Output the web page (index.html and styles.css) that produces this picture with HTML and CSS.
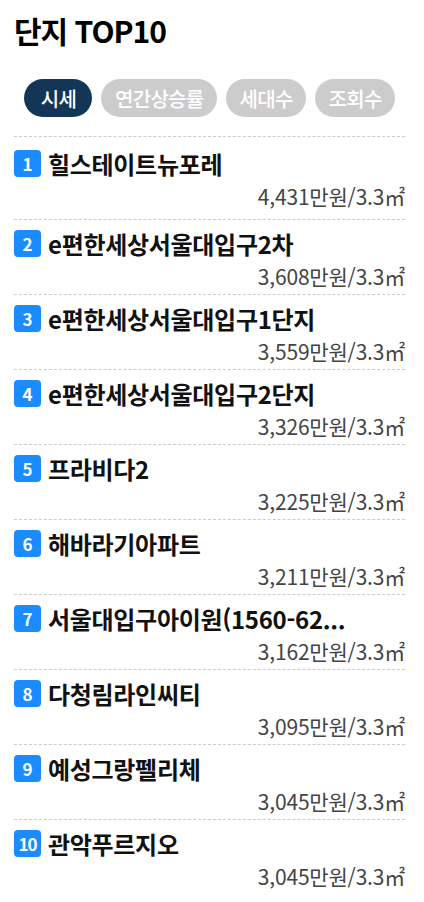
FILE: index.html
```html
<!DOCTYPE html>
<html lang="ko">
<head>
<meta charset="utf-8">
<link rel="stylesheet" href="styles.css">
</head>
<body>
<div class="wrap">
  <h1 class="title">단지 TOP10</h1>
  <div class="tabs">
    <span class="tab active">시세</span>
    <span class="tab">연간상승률</span>
    <span class="tab">세대수</span>
    <span class="tab">조회수</span>
  </div>
  <ul class="list">
    <li class="item"><div class="name-row"><span class="rank">1</span><span class="name">힐스테이트뉴포레</span></div><div class="price">4,431만원/3.3㎡</div></li>
    <li class="item"><div class="name-row"><span class="rank">2</span><span class="name">e편한세상서울대입구2차</span></div><div class="price">3,608만원/3.3㎡</div></li>
    <li class="item"><div class="name-row"><span class="rank">3</span><span class="name">e편한세상서울대입구1단지</span></div><div class="price">3,559만원/3.3㎡</div></li>
    <li class="item"><div class="name-row"><span class="rank">4</span><span class="name">e편한세상서울대입구2단지</span></div><div class="price">3,326만원/3.3㎡</div></li>
    <li class="item"><div class="name-row"><span class="rank">5</span><span class="name">프라비다2</span></div><div class="price">3,225만원/3.3㎡</div></li>
    <li class="item"><div class="name-row"><span class="rank">6</span><span class="name">해바라기아파트</span></div><div class="price">3,211만원/3.3㎡</div></li>
    <li class="item"><div class="name-row"><span class="rank">7</span><span class="name">서울대입구아이원(1560-62...</span></div><div class="price">3,162만원/3.3㎡</div></li>
    <li class="item"><div class="name-row"><span class="rank">8</span><span class="name">다청림라인씨티</span></div><div class="price">3,095만원/3.3㎡</div></li>
    <li class="item"><div class="name-row"><span class="rank">9</span><span class="name">예성그랑펠리체</span></div><div class="price">3,045만원/3.3㎡</div></li>
    <li class="item"><div class="name-row"><span class="rank rank-wide">10</span><span class="name">관악푸르지오</span></div><div class="price">3,045만원/3.3㎡</div></li>
  </ul>
</div>
</body>
</html>
```

FILE: styles.css
```css
* { box-sizing: border-box; }
html, body { margin: 0; padding: 0; background: #fff; }
body {
  font-family: "Noto Sans CJK KR", "Noto Sans", sans-serif;
  color: #111;
}
.wrap {
  padding: 0 19px 0 14px;
}
.title {
  margin: 0;
  padding-top: 11px;
  font-size: 30px;
  line-height: 38px;
  font-weight: 700;
  letter-spacing: -1px;
  color: #000;
}
.tabs {
  display: flex;
  gap: 9px;
  padding: 0 0 0 10px;
  margin-top: 30px;
  margin-bottom: 19px;
}
.tab {
  display: inline-flex;
  align-items: center;
  justify-content: center;
  height: 38px;
  padding: 0 13px 0 14px;
  border-radius: 19px;
  background: #cccccc;
  color: #fff;
  font-size: 20px;
  font-weight: 500;
  letter-spacing: -0.7px;
}
.tab.active {
  background: #133556;
  min-width: 68px;
}
.list {
  list-style: none;
  margin: 0;
  padding: 0;
}
.item {
  border-top: 1px dashed #cccccc;
  padding: 10px 0 6px;
}
.item:first-child {
  padding-top: 13px;
  padding-bottom: 11px;
}
.name-row {
  display: flex;
  align-items: center;
  height: 27px;
}
.rank {
  flex: none;
  width: 27px;
  height: 27px;
  border-radius: 4px;
  background: #1a8cff;
  color: #fff;
  font-size: 17px;
  font-weight: 700;
  line-height: 27px;
  text-align: center;
}
.rank-wide { letter-spacing: -1px; }
.name {
  margin-left: 7px;
  font-size: 24px;
  font-weight: 700;
  color: #111;
  white-space: nowrap;
  line-height: 30px;
  letter-spacing: -0.3px;
}
.price {
  margin-top: 7px;
  text-align: right;
  font-size: 21px;
  line-height: 24px;
  color: #444;
  letter-spacing: -0.2px;
}
```
